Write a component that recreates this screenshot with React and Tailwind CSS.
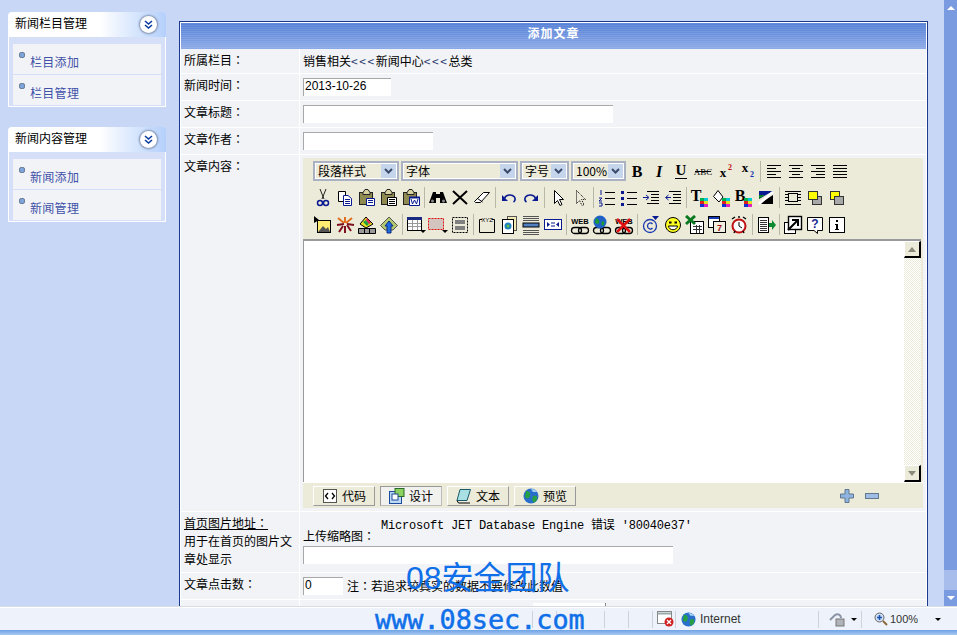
import React from "react";

const Svg = ({ children, w = 20, h = 20 }) => (
  <svg width={w} height={h} viewBox={`0 0 ${w} ${h}`} fill="none" strokeWidth="1">
    {children}
  </svg>
);

const lines = (ys, x1, x2, c = "#000") =>
  ys.map((y, i) => {
    const a = Array.isArray(x1) ? x1[i] : x1;
    const b = Array.isArray(x2) ? x2[i] : x2;
    return <path key={i} d={`M${a} ${y + 0.5}H${b}`} stroke={c} />;
  });

const Pal = ({ x = 10, y = 10 }) => (
  <g>
    <rect x={x} y={y} width="4" height="3" fill="#00b050" />
    <rect x={x + 4} y={y} width="4" height="3" fill="#00c8d8" />
    <rect x={x} y={y + 3} width="4" height="3" fill="#e02020" />
    <rect x={x + 4} y={y + 3} width="4" height="3" fill="#e0e020" />
    <rect x={x} y={y + 6} width="4" height="3" fill="#1030d0" />
    <rect x={x + 4} y={y + 6} width="4" height="3" fill="#e020c0" />
  </g>
);

const Paste = ({ children }) => (
  <g>
    <rect x="2.5" y="4.5" width="13" height="12" fill="#8f8a50" stroke="#222" />
    <path d="M6 4.5 L8 1.5H11L13 4.5V6.5H6Z" fill="#d8d2a0" stroke="#222" />
    {children}
  </g>
);

const Chain = ({ top }) => (
  <g>
    <rect x="1.5" y="12.5" width="10" height="6" rx="3" stroke="#000" strokeWidth="1.3" />
    <rect x="8.5" y="12.5" width="10" height="6" rx="3" stroke="#000" strokeWidth="1.3" />
    {top}
  </g>
);

const webLabel = (
  <text x="10" y="9" textAnchor="middle" fontSize="7.5" fontWeight="bold" fontFamily="Liberation Sans, sans-serif" fill="#000">
    WEB
  </text>
);

const Align = ({ a }) => {
  const rows = [2, 5, 8, 11, 14];
  const spans = {
    l: [[3, 17], [3, 12], [3, 17], [3, 12], [3, 17]],
    c: [[3, 17], [6, 14], [3, 17], [6, 14], [3, 17]],
    r: [[3, 17], [8, 17], [3, 17], [8, 17], [3, 17]],
    j: [[3, 17], [3, 17], [3, 17], [3, 17], [3, 17]],
  }[a];
  return (
    <Svg>
      {rows.map((y, i) => (
        <path key={y} d={`M${spans[i][0]} ${y + 2.5}H${spans[i][1]}`} stroke="#000" />
      ))}
    </Svg>
  );
};

const letter = (t, props = {}) => (
  <text
    textAnchor="middle"
    fontFamily="Liberation Serif, serif"
    fontWeight="bold"
    fill="#000"
    {...props}
  >
    {t}
  </text>
);

const icons = {
  bold: <Svg>{letter("B", { x: 10, y: 16, fontSize: 16 })}</Svg>,
  italic: <Svg>{letter("I", { x: 10, y: 16, fontSize: 16, fontStyle: "italic" })}</Svg>,
  underline: (
    <Svg>
      {letter("U", { x: 10, y: 14, fontSize: 15 })}
      <path d="M4 17.5H16" stroke="#000" />
    </Svg>
  ),
  strike: (
    <Svg>
      {letter("ABC", { x: 10, y: 14, fontSize: 9, fontWeight: "normal" })}
      <path d="M2 10.5H18" stroke="#000" />
    </Svg>
  ),
  sup: (
    <Svg>
      {letter("x", { x: 8, y: 16, fontSize: 13 })}
      {letter("2", { x: 15, y: 9, fontSize: 8, fill: "#c01010" })}
    </Svg>
  ),
  sub: (
    <Svg>
      {letter("x", { x: 8, y: 11, fontSize: 13 })}
      {letter("2", { x: 15, y: 16, fontSize: 8, fill: "#1030b0" })}
    </Svg>
  ),
  al: <Align a="l" />,
  ac: <Align a="c" />,
  ar: <Align a="r" />,
  aj: <Align a="j" />,
  cut: (
    <Svg>
      <path d="M7 1L11 11M13 1L9 11" stroke="#222" />
      <circle cx="7" cy="15" r="2.5" stroke="#0a1a90" strokeWidth="1.5" />
      <circle cx="13" cy="15" r="2.5" stroke="#0a1a90" strokeWidth="1.5" />
    </Svg>
  ),
  copy: (
    <Svg>
      <path d="M3.5 3.5H10.5V13.5H3.5Z" fill="#fff" stroke="#000" />
      <path d="M8.5 7.5H13L16.5 10.5V17.5H8.5Z" fill="#fff" stroke="#0a1a90" />
      {lines([11, 13, 15], 10, 15, "#0a1a90")}
    </Svg>
  ),
  paste: (
    <Svg>
      <Paste>
        <path d="M9.5 10.5H17.5V17.5H9.5Z" fill="#fff" stroke="#0a1a90" />
        {lines([12, 14], 11, 16, "#0a1a90")}
      </Paste>
    </Svg>
  ),
  pasteText: (
    <Svg>
      <Paste>
        <path d="M8.5 9.5H17.5V17.5H8.5Z" fill="#fff" stroke="#000" />
        {lines([11, 13, 15], 10, 16)}
      </Paste>
    </Svg>
  ),
  pasteWord: (
    <Svg>
      <Paste>
        <path d="M8.5 9.5H18.5V17.5H8.5Z" fill="#fff" stroke="#0a1a90" />
        <path d="M8 9.5H19" stroke="#0a1a90" strokeWidth="2" />
        <path d="M10 11L11.5 16L13.5 12L15.5 16L17 11" stroke="#0a1a90" />
      </Paste>
    </Svg>
  ),
  find: (
    <Svg>
      <path d="M1 15L5 4H8V15H1ZM19 15L15 4H12V15H19Z" fill="#000" />
      <rect x="8" y="6" width="4" height="4" fill="#000" />
      <circle cx="4.5" cy="13" r="1.5" fill="#888" />
      <circle cx="15.5" cy="13" r="1.5" fill="#888" />
    </Svg>
  ),
  del: (
    <Svg>
      <path d="M3 3L17 16M17 3L3 16" stroke="#000" strokeWidth="2" />
    </Svg>
  ),
  eraser: (
    <Svg>
      <path d="M2.5 13.5L11.5 4.5H17.5L8.5 14.5H3.5Z" fill="#fff" stroke="#000" />
      <path d="M5.5 10.5L10.5 14" stroke="#000" />
    </Svg>
  ),
  undo: (
    <Svg>
      <path d="M5 11C7 6 13 6 15.5 9C16.5 11 16 13 14.5 14" stroke="#0a1a90" strokeWidth="1.6" />
      <path d="M3 7V13H9Z" fill="#0a1a90" />
    </Svg>
  ),
  redo: (
    <Svg>
      <path d="M15 11C13 6 7 6 4.5 9C3.5 11 4 13 5.5 14" stroke="#0a1a90" strokeWidth="1.6" />
      <path d="M17 7V13H11Z" fill="#0a1a90" />
    </Svg>
  ),
  pointer: (
    <Svg>
      <path d="M6.5 2.5V15.5L9.5 12.5L12 17.5L14 16.5L11.5 11.5H15.5Z" fill="#fff" stroke="#000" />
    </Svg>
  ),
  pointerDot: (
    <Svg>
      <path d="M6.5 2.5V15.5L9.5 12.5L12 17.5L14 16.5L11.5 11.5H15.5Z" stroke="#000" strokeDasharray="1 1" />
    </Svg>
  ),
  ol: (
    <Svg>
      <path d="M4 2V7M2 10H5L2 13H5M2 15H5V18H2" stroke="#0a1a90" />
      {lines([4, 10, 16], 8, 18)}
    </Svg>
  ),
  ul: (
    <Svg>
      <rect x="2" y="3" width="3" height="3" fill="#0a1a90" />
      <rect x="2" y="9" width="3" height="3" fill="#0a1a90" />
      <rect x="2" y="15" width="3" height="3" fill="#0a1a90" />
      {lines([4, 10, 16], 8, 18)}
    </Svg>
  ),
  indent: (
    <Svg>
      {lines([3, 6, 9, 12, 15], [6, 10, 10, 10, 6], 18)}
      <path d="M2 9.5H7M5 7L8 9.5L5 12" stroke="#0a1a90" />
    </Svg>
  ),
  outdent: (
    <Svg>
      {lines([3, 6, 9, 12, 15], [6, 10, 10, 10, 6], 18)}
      <path d="M3 9.5H8M5.5 7L2.5 9.5L5.5 12" stroke="#0a1a90" />
    </Svg>
  ),
  tColor: (
    <Svg>
      {letter("T", { x: 6, y: 13, fontSize: 16 })}
      <Pal />
    </Svg>
  ),
  bucket: (
    <Svg>
      <path d="M6 2.5L1.5 8.5L7 14L11 9Z" fill="#fff" stroke="#000" />
      <Pal />
    </Svg>
  ),
  bColor: (
    <Svg>
      {letter("B", { x: 6, y: 13, fontSize: 16 })}
      <Pal />
    </Svg>
  ),
  gradient: (
    <Svg>
      <path d="M3 3H17L3 11Z" fill="#0a1a90" />
      <path d="M3 11L9 7L3 7Z" fill="#0a8020" />
      <path d="M3 16H17V7Z" fill="#000" />
      <path d="M3 16L17 4" stroke="#fff" strokeWidth="2.5" />
    </Svg>
  ),
  frame: (
    <Svg>
      {lines([3, 16], 2, 18)}
      {lines([6, 9, 12], 15, 18)}
      {lines([6, 9, 12], 2, 5)}
      <rect x="5.5" y="5.5" width="9" height="8" stroke="#000" />
    </Svg>
  ),
  yellowFront: (
    <Svg>
      <rect x="7.5" y="8.5" width="9" height="8" fill="#a8a8a8" stroke="#333" />
      <rect x="3.5" y="3.5" width="9" height="8" fill="#ffff00" stroke="#333" />
    </Svg>
  ),
  yellowBack: (
    <Svg>
      <rect x="3.5" y="3.5" width="9" height="8" fill="#ffff00" stroke="#333" />
      <rect x="7.5" y="8.5" width="9" height="8" fill="#a8a8a8" stroke="#333" />
    </Svg>
  ),
  image: (
    <Svg>
      <path d="M1 1L6 5L1 8Z" fill="#000" />
      <rect x="4.5" y="5.5" width="13" height="12" fill="#ffec70" stroke="#000" />
      <path d="M5 17L10 11L13 14L15 12L17 17Z" fill="#555" />
    </Svg>
  ),
  burst: (
    <Svg>
      <path d="M9 8L3 3M10 8L10 2M11 8L17 3" stroke="#e07020" strokeWidth="2" />
      <path d="M9 9L2 10M8 11L4 17M10 11L10 18M12 10L16 16M12 9L19 10" stroke="#801020" strokeWidth="2" />
    </Svg>
  ),
  colors: (
    <Svg>
      <path d="M9 2L16 9L9 13L3 9Z" fill="#e8e020" stroke="#000" />
      <path d="M6 7L10 11L12 9L9 5Z" fill="#20a040" />
      <path d="M10 3L14 8L12 9L9 5Z" fill="#e02060" />
      <path d="M1.5 13.5H18.5V18.5H1.5Z" fill="#999" stroke="#000" />
      <path d="M7.5 13.5V18.5M12.5 13.5V18.5" stroke="#000" />
    </Svg>
  ),
  home: (
    <Svg>
      <path d="M10 2L18.5 10.5L14 15H6L1.5 10.5Z" fill="#b4c870" stroke="#555" />
      <path d="M10 6L14 11H12V18H8V11H6Z" fill="#1e6ae0" stroke="#0a2a80" />
    </Svg>
  ),
  table: (
    <Svg w={22}>
      <rect x="2.5" y="2.5" width="14" height="13" fill="#fff" stroke="#000" />
      <rect x="2" y="2" width="15" height="3" fill="#1a2a80" />
      {[8, 11].map((y) => (
        <path key={y} d={`M3 ${y + 0.5}H16`} stroke="#999" />
      ))}
      <path d="M7.5 5V15M12.5 5V15" stroke="#999" />
      <path d="M15 15H21L18 18Z" fill="#000" />
    </Svg>
  ),
  cell: (
    <Svg w={22}>
      <rect x="1.5" y="3.5" width="15" height="11" fill="#d4c4c0" stroke="#e01010" strokeDasharray="2 1" />
      <path d="M15 15H21L18 18Z" fill="#000" />
    </Svg>
  ),
  split: (
    <Svg>
      <rect x="2.5" y="2.5" width="15" height="15" stroke="#000" strokeDasharray="2 1" />
      <rect x="5" y="5" width="10" height="4" fill="#808080" />
      <rect x="5" y="11" width="10" height="4" fill="#808080" />
    </Svg>
  ),
  xyz: (
    <Svg>
      <path d="M5 4.5H2.5V17.5H17.5V4.5H15" stroke="#000" />
      <text x="10" y="7" textAnchor="middle" fontSize="6" fontFamily="Liberation Sans, sans-serif" fill="#000">
        XYZ
      </text>
    </Svg>
  ),
  media: (
    <Svg>
      <rect x="8.5" y="1.5" width="9" height="14" fill="#f0e8b0" stroke="#555" />
      <rect x="3.5" y="4.5" width="11" height="14" fill="#fff" stroke="#000" />
      <circle cx="9" cy="11" r="3.5" fill="#2080c0" />
      <circle cx="9" cy="11" r="1.5" fill="#60c040" />
    </Svg>
  ),
  hr: (
    <Svg>
      {lines([1, 3, 5, 15, 17, 19], 2, 18, "#555")}
      <rect x="2" y="8" width="16" height="4" fill="#5080c0" stroke="#000" />
    </Svg>
  ),
  marquee: (
    <Svg>
      <rect x="1.5" y="4.5" width="17" height="10" fill="#fff" stroke="#0a1a90" />
      <path d="M4 7L7 9.5L4 12ZM16 7L13 9.5L16 12Z" fill="#0a1a90" />
      <path d="M8 8H12M8 11H12" stroke="#0a1a90" />
    </Svg>
  ),
  web: <Svg><Chain top={webLabel} /></Svg>,
  globeLink: (
    <Svg>
      <Chain
        top={
          <g>
            <circle cx="8" cy="7" r="6.5" fill="#1f60c8" />
            <path d="M4 3C7 4 8 6 7 8S4 9 3 7ZM10 6C13 6 13 9 11 11C9 10 9 8 10 6Z" fill="#1c9a3a" />
          </g>
        }
      />
    </Svg>
  ),
  noLink: (
    <Svg>
      <Chain top={webLabel} />
      <path d="M3 4L16 17M16 4L3 17" stroke="#e01010" strokeWidth="2.5" />
    </Svg>
  ),
  copyright: (
    <Svg>
      <circle cx="9" cy="11" r="6.5" stroke="#1a3ab0" strokeWidth="1.3" />
      <path d="M11.5 9C10 7 6.5 8 6.5 11S10 15 11.5 13" stroke="#1a3ab0" strokeWidth="1.3" />
      <path d="M11 1H18L14.5 5Z" fill="#0a1a90" />
    </Svg>
  ),
  smile: (
    <Svg>
      <circle cx="10" cy="10" r="7.5" fill="#ffff20" stroke="#000" />
      <path d="M6 7.5H8.5M11.5 7.5H14" stroke="#000" strokeWidth="2" />
      <path d="M5.5 11H14.5C14 16 6 16 5.5 11Z" fill="#fff" stroke="#000" />
    </Svg>
  ),
  excel: (
    <Svg>
      <rect x="5.5" y="6.5" width="13" height="12" fill="#fff" stroke="#000" />
      {lines([11, 14], 8, 17, "#333")}
      <path d="M11.5 10V18M14.5 10V18" stroke="#333" />
      <path d="M1 1L10 9M10 1L1 9" stroke="#0a7a20" strokeWidth="3" />
    </Svg>
  ),
  calendar: (
    <Svg>
      <rect x="1.5" y="1.5" width="11" height="11" fill="#fff" stroke="#000" />
      <path d="M2 3H12" stroke="#1a3ab0" strokeWidth="2" />
      <rect x="6.5" y="6.5" width="12" height="11" fill="#f0eee0" stroke="#000" />
      <text x="12.5" y="15.5" textAnchor="middle" fontSize="9" fontWeight="bold" fontFamily="Liberation Sans, sans-serif" fill="#a01010">
        7
      </text>
    </Svg>
  ),
  clock: (
    <Svg>
      <circle cx="10" cy="11" r="6.5" fill="#fff" stroke="#c01010" strokeWidth="2" />
      <path d="M10 7V11L13 13" stroke="#000" />
      <path d="M3 4L6 2M17 4L14 2M10 1V3M5 18L6 16M15 18L14 16" stroke="#000" strokeWidth="1.4" />
    </Svg>
  ),
  docArrow: (
    <Svg>
      <rect x="2.5" y="2.5" width="10" height="15" fill="#fff" stroke="#000" />
      {lines([5, 7, 9, 11, 13, 15], 4, 11, "#333")}
      <path d="M13 8H16V5L20 10L16 15V12H13Z" fill="#0a8a30" />
    </Svg>
  ),
  popup: (
    <Svg>
      <rect x="1.5" y="7.5" width="11" height="11" fill="#fff" stroke="#000" />
      <rect x="5.5" y="1.5" width="13" height="13" fill="#fff" stroke="#000" strokeWidth="1.4" />
      <path d="M5 15L15 5M9 5H15V11" stroke="#000" strokeWidth="2" />
    </Svg>
  ),
  help: (
    <Svg>
      <path d="M2.5 2.5H17.5V15.5H12.5L12.5 18.5L9 15.5H2.5Z" fill="#fff" stroke="#000" />
      <text x="10" y="13" textAnchor="middle" fontSize="12" fontWeight="bold" fontFamily="Liberation Sans, sans-serif" fill="#1a2a90">
        ?
      </text>
    </Svg>
  ),
  info: (
    <Svg>
      <rect x="2.5" y="2.5" width="15" height="15" fill="#fff" stroke="#000" />
      <path d="M9 5H11V7H9ZM8 9H11V14H12V15H8V14H9V10H8Z" fill="#000" />
    </Svg>
  ),
};

const row2 = ["cut", "copy", "paste", "pasteText", "pasteWord", "|", "find", "del", "eraser", "|", "undo", "redo", "|", "pointer", "pointerDot", "|", "ol", "ul", "indent", "outdent", "|", "tColor", "bucket", "bColor", "gradient", "|", "frame", "yellowFront", "yellowBack"];
const row3 = ["image", "burst", "colors", "home", "|", "table", "cell", "split", "|", "xyz", "media", "hr", "marquee", "|", "web", "globeLink", "noLink", "|", "copyright", "smile", "excel", "calendar", "clock", "|", "docArrow", "|", "popup", "help", "info"];
const row1 = ["bold", "italic", "underline", "strike", "sup", "sub", "|", "al", "ac", "ar", "aj"];

const ToolRow = ({ items }) => (
  <div className="flex items-center h-[27px]">
    {items.map((name, i) =>
      name === "|" ? (
        <div key={i} className="w-[5px] h-[21px] flex justify-center shrink-0">
          <div className="w-px bg-[#b8b8a8]" />
        </div>
      ) : (
        <div key={i} className="w-[22px] h-[22px] flex items-center justify-center shrink-0">
          {icons[name]}
        </div>
      )
    )}
  </div>
);

const Select = ({ label, w }) => (
  <div className={`${w} h-[20px] flex items-center border-2 border-[#a9b1c2] bg-white p-px shrink-0`}>
    <div className="flex-1 h-full bg-[#ecead9] pl-[2px] leading-[13px] whitespace-nowrap">{label}</div>
    <div className="w-[15px] h-full bg-[#c5d5ec] flex items-center justify-center">
      <svg width="9" height="6" viewBox="0 0 9 6">
        <path d="M1 1L4.5 4.5L8 1" stroke="#3a4a6a" strokeWidth="2" fill="none" />
      </svg>
    </div>
  </div>
);

const Collapse = () => (
  <div className="w-[17px] h-[17px] rounded-full bg-white shadow-[0_0_2px_1px_#7a8aa8] flex items-center justify-center">
    <svg width="9" height="10" viewBox="0 0 9 10">
      <path d="M1 1L4.5 4L8 1M1 5L4.5 8L8 5" stroke="#0a3aa0" strokeWidth="1.6" fill="none" />
    </svg>
  </div>
);

const SideLink = ({ label }) => (
  <div className="relative h-[30px] bg-[#f1f3f6]">
    <div className="absolute left-[6px] top-[8px] w-[6px] h-[6px] rounded-[2px] bg-[#7ea4dc] border border-[#6d7f9a]" />
    <div className="pl-[17px] pt-[11px] text-[#3f50a8] leading-[14px] tracking-[0.3px]">{label}</div>
  </div>
);

const SideBox = ({ title, links }) => (
  <div>
    <div className="h-[25px] rounded-t-[4px] bg-[linear-gradient(90deg,#fff_58%,#b4d0fb_100%)] flex items-center justify-between pl-[7px] pr-[9px] text-black">
      <span className="mb-[3px]">{title}</span>
      <Collapse />
    </div>
    <div className="border border-t-0 border-white bg-[#d5dff8] px-[4px] pt-[7px] pb-[1px] flex flex-col gap-px">
      {links.map((l) => (
        <SideLink key={l} label={l} />
      ))}
    </div>
  </div>
);

// 全角冒号用 TC 字形，才是居中的
const Colon = () => <span className="font-['Noto_Sans_CJK_TC',sans-serif]">：</span>;

const Row = ({ label, h, children, className = "" }) => (
  <div className={`flex gap-px shrink-0 ${h}`}>
    <div className="w-[118px] shrink-0 bg-[#f1f3f6] pl-[3px] pt-[4px] leading-[14px]">{label}</div>
    <div className={`flex-1 bg-[#f1f3f6] pl-[3px] ${className}`}>{children}</div>
  </div>
);

const TextBox = ({ w, value }) => (
  <div className={`${w} h-[18px] shrink-0 bg-white border-t border-l border-[#a8a8a8] pl-px leading-[15px] font-['Liberation_Sans',sans-serif]`}>
    {value}
  </div>
);

const Tab = ({ label, active, icon }) => (
  <div
    className={`w-[62px] h-[20px] flex items-center justify-center gap-[4px] border-t border-l border-white border-r border-b ${
      active ? "bg-[#f1f1ee] border-r-[#bbb] border-b-[#bbb] border-t-[#999] border-l-[#999]" : "border-r-[#999] border-b-[#999]"
    }`}
  >
    {icon}
    <span>{label}</span>
  </div>
);

const Globe = ({ s = 16 }) => (
  <svg width={s} height={s} viewBox="0 0 16 16">
    <circle cx="8" cy="8" r="7.5" fill="#2a6ecc" />
    <path d="M3 3C6 3 8 5 7 8S4 11 2 9ZM10 8C13 7 15 8 14 11C13 14 11 15 10 14C9 12 9 10 10 8Z" fill="#27a044" />
    <path d="M8 1C11 1 13 2 14 4L10 4Z" fill="#a8d4f4" />
  </svg>
);

const tabIcons = {
  code: (
    <svg width="16" height="16" viewBox="0 0 16 16">
      <rect x="1.5" y="1.5" width="13" height="13" fill="#fff" stroke="#555" />
      <path d="M6 5L3.5 8L6 11M10 5L12.5 8L10 11" stroke="#000" strokeWidth="1.3" fill="none" />
    </svg>
  ),
  design: (
    <svg width="16" height="16" viewBox="0 0 16 16">
      <rect x="0.5" y="3.5" width="12" height="12" fill="#bcd8f4" stroke="#1a4a9a" />
      <rect x="6" y="0.5" width="9" height="8" fill="#8cd060" stroke="#2a6a2a" />
      <rect x="3" y="6" width="6" height="6" fill="#fff" stroke="#1a4a9a" />
    </svg>
  ),
  text: (
    <svg width="16" height="16" viewBox="0 0 16 16">
      <path d="M4 1.5H14.5L11 12.5H1Z" fill="#a8e0e4" stroke="#1a5a6a" />
      <path d="M1 12.5L2.5 15H14" stroke="#000" fill="none" />
    </svg>
  ),
};

const Cell = ({ w, children, className = "" }) => (
  <div className={`${w} h-[17px] shrink-0 border-r border-[#cfd2d8] flex items-center ${className}`}>{children}</div>
);

export default function App() {
  return (
    <div className="relative w-[957px] h-[635px] overflow-hidden flex flex-col bg-[#c9d7f6] text-[12px] text-black font-['Noto_Sans_CJK_SC','Liberation_Sans',sans-serif]">
      <div className="flex flex-1 min-h-0">
        <div className="w-[158px] ml-[8px] mr-[13px] pt-[12px] flex flex-col gap-[20px] shrink-0">
          <SideBox title="新闻栏目管理" links={["栏目添加", "栏目管理"]} />
          <SideBox title="新闻内容管理" links={["新闻添加", "新闻管理"]} />
        </div>

        <div className="w-[749px] mt-[21px] shrink-0 border-x border-t border-[#1f3a8a] bg-white px-px pt-px flex flex-col gap-px overflow-hidden">
          <div className="h-[26px] -mb-px shrink-0 flex items-center justify-center pb-[6px] text-white font-bold tracking-[1px] bg-[repeating-linear-gradient(0deg,transparent_0_1px,#ffffff18_1px_2px),linear-gradient(180deg,#5580d6,#8daae8)]">
            添加文章
          </div>
          <Row label={<>所属栏目<Colon /></>} h="h-[24px]" className="flex items-center">
            <span>
              销售相关<span className="text-[#2a3a70] tracking-[1.6px]">&lt;&lt;&lt;</span>新闻中心<span className="text-[#2a3a70] tracking-[1.6px]">&lt;&lt;&lt;</span>总类
            </span>
          </Row>
          <Row label={<>新闻时间<Colon /></>} h="h-[26px]" className="pt-[4px]">
            <TextBox w="w-[88px]" value="2013-10-26" />
          </Row>
          <Row label={<>文章标题<Colon /></>} h="h-[26px]" className="pt-[4px]">
            <TextBox w="w-[310px]" />
          </Row>
          <Row label={<>文章作者<Colon /></>} h="h-[26px]" className="pt-[4px]">
            <TextBox w="w-[130px]" />
          </Row>
          <Row label={<>文章内容<Colon /></>} h="h-[356px]" className="pt-[3px]">
            <div className="w-[620px] h-[350px] bg-[#ecead9] flex flex-col">
              <div className="flex items-center h-[26px] pl-[10px] gap-[2px]">
                <Select label="段落样式" w="w-[86px]" />
                <Select label="字体" w="w-[117px]" />
                <Select label="字号" w="w-[49px]" />
                <Select label="100%" w="w-[55px]" />
                <div className="-ml-[2px]">
                  <ToolRow items={row1} />
                </div>
              </div>
              <div className="pl-[9px]">
                <ToolRow items={row2} />
                <ToolRow items={row3} />
              </div>
              <div className="flex h-[243px] shrink-0 mr-[2px] mt-[1px] bg-white border-t-2 border-l border-[#9a9a9a]">
                <div className="flex-1" />
                <div className="w-[17px] flex flex-col bg-[repeating-conic-gradient(#ecead9_0_25%,#ffffff_0_50%)] bg-[length:2px_2px]">
                  <div className="h-[17px] bg-[#ecead9] border-t border-l border-white border-r-2 border-b-2 border-r-black border-b-black flex items-center justify-center">
                    <div className="w-0 h-0 border-x-[4px] border-x-transparent border-b-[5px] border-b-[#8a8a7a]" />
                  </div>
                  <div className="flex-1" />
                  <div className="h-[17px] bg-[#ecead9] border-t border-l border-white border-r-2 border-b-2 border-r-black border-b-black flex items-center justify-center">
                    <div className="w-0 h-0 border-x-[4px] border-x-transparent border-t-[5px] border-t-[#8a8a7a]" />
                  </div>
                </div>
              </div>
              <div className="flex-1 flex items-center pl-[10px] gap-[5px] border-t border-white">
                <Tab label="代码" icon={tabIcons.code} />
                <Tab label="设计" active icon={tabIcons.design} />
                <Tab label="文本" icon={tabIcons.text} />
                <Tab label="预览" icon={<Globe />} />
                <div className="ml-auto flex items-center gap-[11px] pr-[44px]">
                  <svg width="14" height="14" viewBox="0 0 14 14">
                    <path d="M5 .5H9V5H13.5V9H9V13.5H5V9H.5V5H5Z" fill="#8fb4e0" stroke="#5f7890" />
                  </svg>
                  <svg width="14" height="6" viewBox="0 0 14 6">
                    <rect x=".5" y=".5" width="13" height="5" fill="#9fbce4" stroke="#5f7890" />
                  </svg>
                </div>
              </div>
            </div>
          </Row>
          <Row
            label={
              <div className="-mt-[2px] leading-[18px]">
                <div className="underline">首页图片地址<Colon /></div>
                <div>用于在首页的图片文章处显示</div>
              </div>
            }
            h="h-[60px]"
          >
            <div className="pl-[78px] pt-[7px] leading-[14px] font-['Liberation_Mono','Noto_Sans_CJK_SC',monospace] tracking-[-0.2px]">
              Microsoft JET Database Engine 错误 '80040e37'
            </div>
            <div className="leading-[14px] -mt-[4px] mb-[3px]">上传缩略图<Colon /></div>
            <TextBox w="w-[370px]" />
          </Row>
          <Row label={<>文章点击数<Colon /></>} h="h-[26px]" className="pt-[4px] flex">
            <TextBox w="w-[40px]" value="0" />
            <span className="ml-[4px] leading-[18px]"><span>注</span><Colon />若追求较真实的数据不要修改此数值</span>
          </Row>
          <Row label="" h="h-[9px]">
            <div className="ml-[230px] mt-[3px] w-[73px] h-[6px] bg-white border-r border-[#888]" />
          </Row>
        </div>

        <div className="w-[16px] shrink-0" />
        <div className="w-[13px] shrink-0 flex flex-col bg-[#7b9be0]">
          <div className="h-[16px] flex items-center justify-center">
            <div className="w-0 h-0 border-x-[4px] border-x-transparent border-b-[4px] border-b-white" />
          </div>
          <div className="h-[554px]" />
          <div className="flex-1 bg-[#a9bdec]" />
          <div className="h-[16px] flex items-center justify-center">
            <div className="w-0 h-0 border-x-[4px] border-x-transparent border-t-[4px] border-t-white" />
          </div>
        </div>
      </div>

      <div className="h-[29px] shrink-0 border-t border-[#d8dce4] flex flex-col bg-[#eef3fb]">
        <div className="flex-1 flex items-center text-[#333] font-['Liberation_Sans',sans-serif] border-t border-white">
          <Cell w="w-[533px]" />
          <Cell w="w-[24px]" />
          <Cell w="w-[24px]" />
          <Cell w="w-[24px]" />
          <Cell w="w-[24px]" />
          <Cell w="w-[24px]" />
          <Cell w="w-[23px]" className="pl-[4px]">
            <svg width="18" height="16" viewBox="0 0 18 16" className="shrink-0">
              <rect x=".5" y=".5" width="14" height="12" fill="#fff" stroke="#888" />
              <path d="M1 2.5H14" stroke="#9aa" strokeWidth="2" />
              <circle cx="12" cy="11" r="4.5" fill="#d02020" />
              <path d="M10 9L14 13M14 9L10 13" stroke="#fff" strokeWidth="1.3" />
            </svg>
          </Cell>
          <Cell w="w-[143px]" className="pl-[5px] gap-[4px]">
            <Globe s={15} />
            <span>Internet</span>
          </Cell>
          <Cell w="w-[43px]" className="pl-[10px] gap-[6px]">
            <svg width="16" height="15" viewBox="0 0 16 15">
              <path d="M1 8L6 3C9 1 12 3 12 6" stroke="#8a94a4" strokeWidth="2" fill="none" />
              <rect x="7" y="7" width="8" height="7" fill="#b0b4ba" stroke="#777" />
            </svg>
            <div className="w-0 h-0 border-x-[3px] border-x-transparent border-t-[3px] border-t-black" />
          </Cell>
          <div className="flex-1 flex items-center pl-[12px]">
            <svg width="14" height="14" viewBox="0 0 14 14">
              <circle cx="5.5" cy="5.5" r="4.5" fill="#cfe0f4" stroke="#666" />
              <path d="M3 5.5H8M5.5 3V8" stroke="#1a50b0" strokeWidth="1.6" />
              <path d="M9 9L13 13" stroke="#8a6a3a" strokeWidth="2" />
            </svg>
            <span className="ml-[2px] text-[11px]">100%</span>
            <div className="ml-[17px] w-0 h-0 border-x-[3px] border-x-transparent border-t-[3px] border-t-black" />
          </div>
        </div>
        <div className="h-[5px] bg-[linear-gradient(180deg,#6fa3e6,#a8c8f0)]" />
      </div>

      <div className="absolute left-[406px] top-[559px] text-[32px] leading-[38px] text-[#0f6fe8] whitespace-nowrap font-['Liberation_Sans','Noto_Sans_CJK_SC',sans-serif]">
        08安全团队
      </div>
      <div className="absolute left-[375px] top-[604px] text-[26.8px] leading-[32px] text-[#0f6fe8] [-webkit-text-stroke:0.5px_#0f6fe8] whitespace-pre font-['DejaVu_Sans_Mono',monospace]">
        www.08sec.com
      </div>
    </div>
  );
}
